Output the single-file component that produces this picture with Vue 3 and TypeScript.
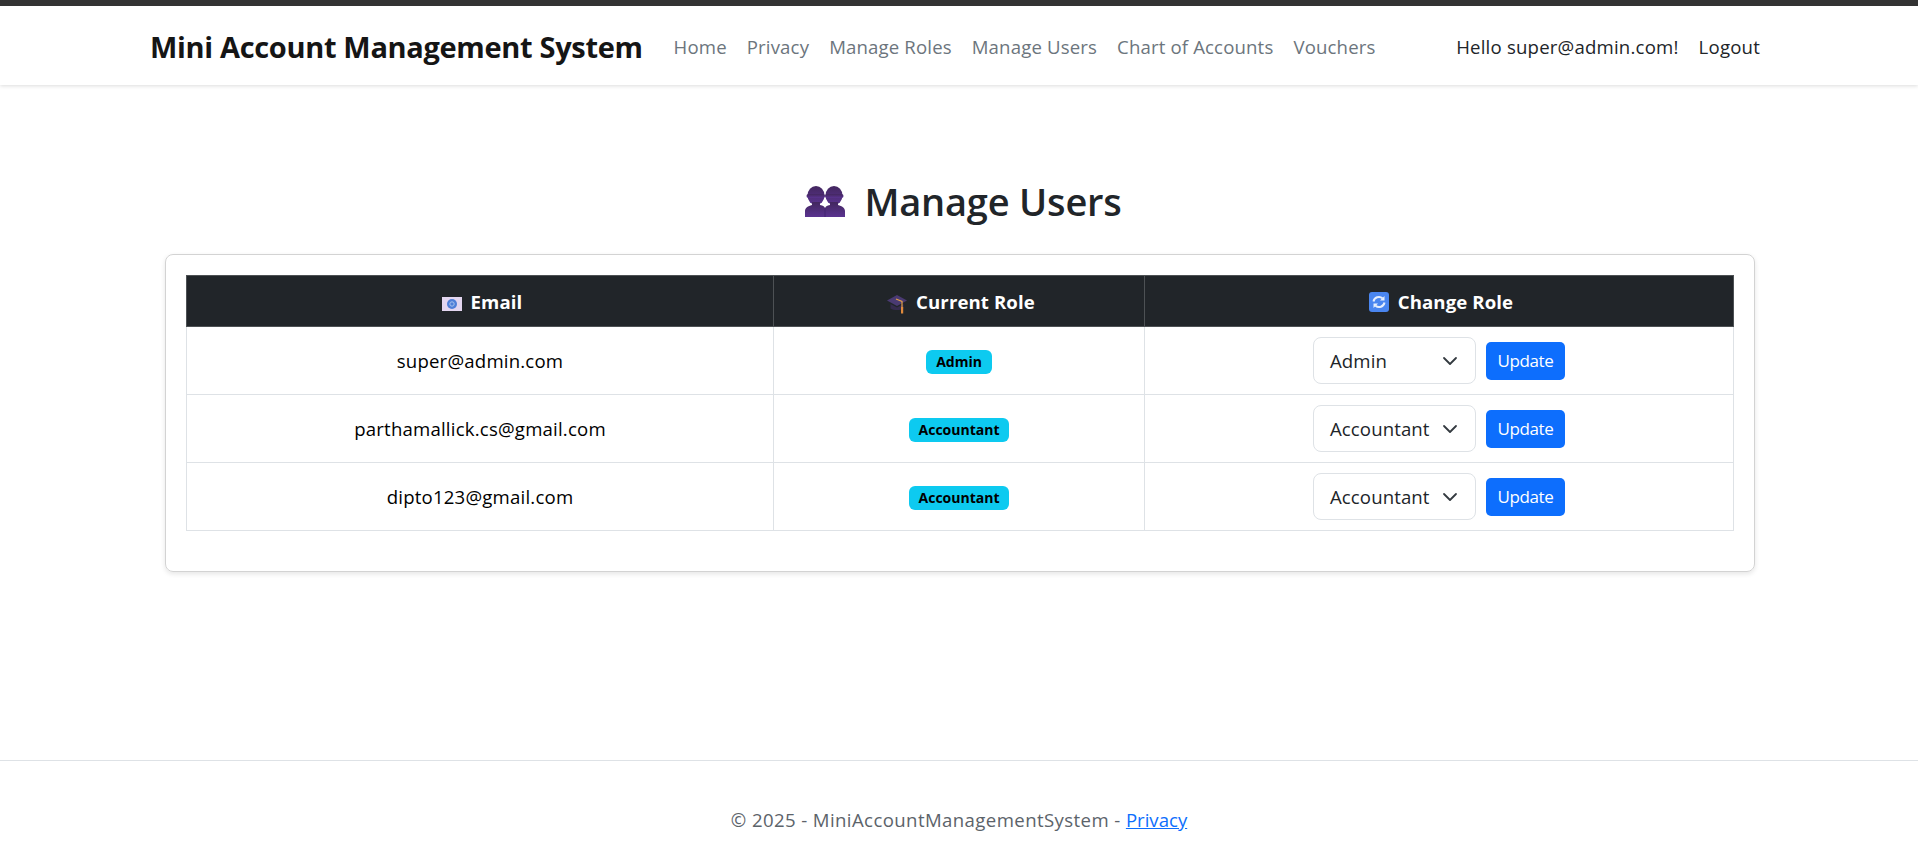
<template>
  <div class="page">
    <header class="navbar">
      <div class="nav-inner">
        <a class="brand">Mini Account Management System</a>
        <nav class="nav-links">
          <a v-for="link in links" :key="link" class="nav-link">{{ link }}</a>
        </nav>
        <div class="nav-user">
          <a class="nav-user-link">Hello super@admin.com!</a>
          <a class="nav-user-link">Logout</a>
        </div>
      </div>
    </header>

    <main class="main">
      <h1 class="title">
        <svg class="title-icon" viewBox="0 0 40 31" aria-hidden="true">
          <defs>
            <linearGradient id="bust" x1="0" y1="0" x2="0" y2="1">
              <stop offset="0" stop-color="#43275f" />
              <stop offset="1" stop-color="#5a3390" />
            </linearGradient>
          </defs>
          <g fill="url(#bust)">
            <ellipse cx="11" cy="9.500" rx="8.500" ry="9.500" />
            <ellipse cx="29" cy="9.500" rx="8.500" ry="9.500" />
            <rect x="1.500" y="8" width="18.500" height="4" rx="2" />
            <rect x="20" y="8" width="18.500" height="4" rx="2" />
            <path d="M0 31v-6c0-3 3-5 7-6v-3h8v3c3 .6 5 1.500 5 3.500 0-2 2-2.900 5-3.500v-3h8v3c4 1 7 3 7 6v6z" />
          </g>
          <path d="M20 22v9" stroke="#432570" stroke-width="1" />
        </svg>
        <span>Manage Users</span>
      </h1>

      <section class="card">
        <table class="users-table">
          <colgroup>
            <col class="col-email" />
            <col class="col-role" />
            <col class="col-change" />
          </colgroup>
          <thead>
            <tr>
              <th>
                <svg class="th-icon email-icon" viewBox="0 0 20 14" aria-hidden="true">
                  <rect width="20" height="14" fill="#e3d6f0" />
                  <circle cx="10" cy="7" r="5" fill="#4f7fd8" />
                  <circle cx="10" cy="7" r="2.200" fill="none" stroke="#a9c3ee" stroke-width="1" />
                </svg>
                Email
              </th>
              <th>
                <svg class="th-icon cap-icon" viewBox="0 0 20 20" aria-hidden="true">
                  <path d="M0 6.500L10 1l10 5.500L10 12z" fill="#4a3a72" />
                  <path d="M3.500 10v4.500c3.500 2 9.500 2 13 0V10L10 13.500z" fill="#352b4e" />
                  <path d="M9 5l6 2.500v6" fill="none" stroke="#e3a04a" stroke-width="1.200" />
                  <path d="M14 13h2.200v6.500H14z" fill="#e08a3c" />
                </svg>
                Current Role
              </th>
              <th>
                <svg class="th-icon sync-icon" viewBox="0 0 20 20" aria-hidden="true">
                  <rect width="20" height="20" rx="3" fill="#4a86f0" />
                  <path d="M4.500 9.500a5.500 5.500 0 0 1 9-3.200M15.500 10.500a5.500 5.500 0 0 1-9 3.200" fill="none" stroke="#e6eefc" stroke-width="2" />
                  <path d="M15.500 4v4.500H11zM4.500 16v-4.500H9z" fill="#e6eefc" />
                </svg>
                Change Role
              </th>
            </tr>
          </thead>
          <tbody>
            <tr v-for="user in users" :key="user.email">
              <td class="email-cell">{{ user.email }}</td>
              <td><span class="badge">{{ user.role }}</span></td>
              <td>
                <form class="role-form" @submit.prevent>
                  <div class="role-select">
                    <span>{{ user.role }}</span>
                    <svg class="chevron" viewBox="0 0 16 16" aria-hidden="true">
                      <path d="M2 5l6 6 6-6" fill="none" stroke="#343a40" stroke-width="1.800" stroke-linecap="round" stroke-linejoin="round" />
                    </svg>
                  </div>
                  <button class="update-btn" type="submit">Update</button>
                </form>
              </td>
            </tr>
          </tbody>
        </table>
      </section>
    </main>

    <footer class="footer">
      © 2025 - MiniAccountManagementSystem - <a class="footer-link">Privacy</a>
    </footer>
  </div>
</template>

<script setup lang="ts">
interface User {
  email: string
  role: string
}

const links: string[] = ['Home', 'Privacy', 'Manage Roles', 'Manage Users', 'Chart of Accounts', 'Vouchers']

const users: User[] = [
  { email: 'super@admin.com', role: 'Admin' },
  { email: 'parthamallick.cs@gmail.com', role: 'Accountant' },
  { email: 'dipto123@gmail.com', role: 'Accountant' }
]
</script>

<style>
html,
body {
  margin: 0;
  background: #fff;
}
</style>

<style scoped>
.page {
  font-family: "Open Sans", "Noto Sans", sans-serif;
  font-size: 18.6px;
  color: #212529;
  height: 867px;
  overflow: hidden;
  letter-spacing: 0.1px;
}

.navbar {
  border-top: 6px solid #333;
  height: 79px;
  background: #fff;
  box-shadow: 0 1px 4px rgba(0, 0, 0, 0.14);
}

.nav-inner {
  width: 1618px;
  box-sizing: border-box;
  margin: 0 auto;
  height: 100%;
  padding: 2px 8px 0 0;
  display: flex;
  align-items: center;
}

.brand {
  font-size: 29px;
  font-weight: 700;
  color: #151515;
  letter-spacing: -0.33px;
  margin-right: 31px;
}

.nav-links {
  display: flex;
  gap: 20px;
  flex: 1;
  letter-spacing: 0.15px;
}

.nav-link {
  color: #6c757d;
}

.nav-user {
  display: flex;
  gap: 20px;
  color: #212529;
  letter-spacing: 0.2px;
}

.main {
  height: 676px;
  box-sizing: border-box;
  padding: 0 165px;
  border-bottom: 1px solid #dee2e6;
}

.title {
  margin: 0;
  padding: 93px 0 0 9px;
  height: 169px;
  box-sizing: border-box;
  display: flex;
  justify-content: center;
  align-items: flex-start;
  gap: 19px;
  font-size: 38px;
  font-weight: 600;
  line-height: 46px;
  letter-spacing: -0.2px;
}

.title-icon {
  width: 40px;
  height: 31px;
  margin-top: 8px;
}

.card {
  width: 1590px;
  box-sizing: border-box;
  padding: 20px 20px 40px;
  border: 1px solid #d3d3d3;
  border-radius: 8px;
  box-shadow: 0 2px 5px rgba(0, 0, 0, 0.1);
}

.users-table {
  width: 100%;
  border-collapse: collapse;
  table-layout: fixed;
}

.col-email {
  width: 587px;
}

.col-role {
  width: 371px;
}

th {
  height: 51px;
  box-sizing: border-box;
  padding: 0 0 0 4px;
  background: #212529;
  color: #fff;
  font-weight: 700;
  text-align: center;
  border: 1px solid #4d5154;
  vertical-align: middle;
}

td {
  height: 68px;
  box-sizing: border-box;
  padding: 0;
  text-align: center;
  border: 1px solid #dee2e6;
  vertical-align: middle;
}

.email-cell {
  color: #000;
  letter-spacing: 0.2px;
}

.th-icon {
  vertical-align: -2px;
  margin-right: 4px;
}

.email-icon {
  width: 20px;
  height: 14px;
}

.cap-icon {
  width: 20px;
  height: 20px;
  vertical-align: -5px;
}

.sync-icon {
  width: 20px;
  height: 20px;
  vertical-align: -3px;
}

.badge {
  display: inline-block;
  background: #0dcaf0;
  color: #000;
  font-size: 14px;
  font-weight: 700;
  line-height: 16px;
  padding: 4px 10px;
  border-radius: 6px;
  letter-spacing: 0;
}

.role-form {
  display: flex;
  justify-content: center;
  align-items: center;
  gap: 10px;
}

.role-select {
  width: 163px;
  height: 47px;
  box-sizing: border-box;
  border: 1px solid #dee2e6;
  border-radius: 8px;
  padding: 0 17px 0 16px;
  display: flex;
  align-items: center;
  justify-content: space-between;
  background: #fff;
}

.chevron {
  width: 16px;
  height: 16px;
  flex-shrink: 0;
}

.update-btn {
  width: 79px;
  height: 38px;
  border: none;
  border-radius: 5px;
  background: #0d6efd;
  color: #fff;
  font: inherit;
  font-size: 17px;
  letter-spacing: -0.4px;
  padding: 0;
}

.footer {
  text-align: center;
  padding-top: 47px;
  color: #5c636a;
  line-height: 24px;
  letter-spacing: 0.4px;
}

.footer-link {
  color: #0d6efd;
  text-decoration: underline;
  letter-spacing: 0;
}
</style>
